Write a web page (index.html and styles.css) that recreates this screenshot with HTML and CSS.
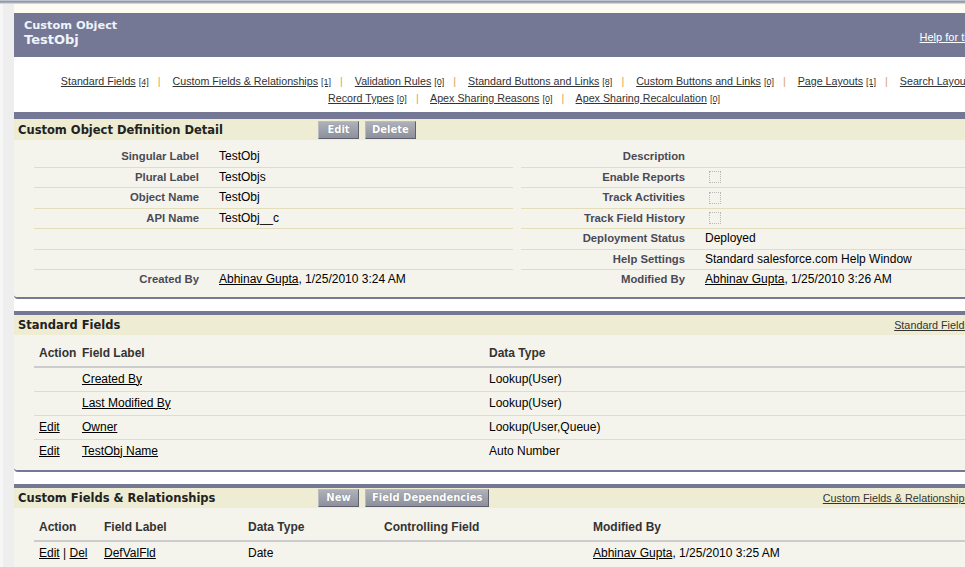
FILE: index.html
```html
<!DOCTYPE html>
<html lang="en">
<head>
    <meta charset="UTF-8">
    <title>Custom Object: TestObj</title>
    <link rel="stylesheet" href="styles.css">
</head>
<body>
    <div class="topline"></div>
    <div class="wrap">
        <div class="gutter"></div>
        <div class="main">
            <div class="page-top">
                <div class="ptitle">
                    <div class="ptitle-text">
                        <div class="ptype">Custom Object</div>
                        <div class="pname">TestObj</div>
                    </div>
                    <a class="ptitle-help" href="#">Help for this Page</a>
                    <span class="help-icon">?</span>
                </div>
            </div>

            <div class="rel-links">
                <div>
                    <a href="#">Standard Fields<span class="count">[4]</span></a><span class="sep">|</span>
                    <a href="#">Custom Fields &amp; Relationships<span class="count">[1]</span></a><span class="sep">|</span>
                    <a href="#">Validation Rules<span class="count">[0]</span></a><span class="sep">|</span>
                    <a href="#">Standard Buttons and Links<span class="count">[8]</span></a><span class="sep">|</span>
                    <a href="#">Custom Buttons and Links<span class="count">[0]</span></a><span class="sep">|</span>
                    <a href="#">Page Layouts<span class="count">[1]</span></a><span class="sep">|</span>
                    <a href="#">Search Layouts<span class="count">[1]</span></a>
                </div>
                <div>
                    <a href="#">Record Types<span class="count">[0]</span></a><span class="sep">|</span>
                    <a href="#">Apex Sharing Reasons<span class="count">[0]</span></a><span class="sep">|</span>
                    <a href="#">Apex Sharing Recalculation<span class="count">[0]</span></a>
                </div>
            </div>

            <!-- detail -->
            <div class="pblock first">
                <div class="pb-head">
                    <h2 class="pb-title">Custom Object Definition Detail</h2>
                    <div class="pb-buttons">
                        <button class="btn">Edit</button>
                        <button class="btn">Delete</button>
                    </div>
                </div>
                <div class="pb-body detail-body">
                    <table class="detail-list">
                        <colgroup>
                            <col style="width:175px"><col style="width:304px"><col style="width:8px"><col style="width:174px"><col style="width:305px">
                        </colgroup>
                        <tr>
                            <td class="lbl">Singular Label</td><td class="val">TestObj</td><td class="sp"></td>
                            <td class="lbl">Description</td><td class="val"></td>
                        </tr>
                        <tr>
                            <td class="lbl">Plural Label</td><td class="val">TestObjs</td><td class="sp"></td>
                            <td class="lbl">Enable Reports</td><td class="val"><span class="chk"></span></td>
                        </tr>
                        <tr>
                            <td class="lbl">Object Name</td><td class="val">TestObj</td><td class="sp"></td>
                            <td class="lbl">Track Activities</td><td class="val"><span class="chk"></span></td>
                        </tr>
                        <tr>
                            <td class="lbl">API Name</td><td class="val">TestObj__c</td><td class="sp"></td>
                            <td class="lbl">Track Field History</td><td class="val"><span class="chk"></span></td>
                        </tr>
                        <tr>
                            <td class="lbl"></td><td class="val"></td><td class="sp"></td>
                            <td class="lbl">Deployment Status</td><td class="val">Deployed</td>
                        </tr>
                        <tr>
                            <td class="lbl"></td><td class="val"></td><td class="sp"></td>
                            <td class="lbl">Help Settings</td><td class="val">Standard salesforce.com Help Window</td>
                        </tr>
                        <tr>
                            <td class="lbl">Created By</td><td class="val"><a href="#">Abhinav Gupta</a>, 1/25/2010 3:24 AM</td><td class="sp"></td>
                            <td class="lbl">Modified By</td><td class="val"><a href="#">Abhinav Gupta</a>, 1/25/2010 3:26 AM</td>
                        </tr>
                    </table>
                </div>
            </div>

            <!-- standard fields -->
            <div class="pblock">
                <div class="pb-head">
                    <h2 class="pb-title">Standard Fields</h2>
                    <a class="pb-help" href="#">Standard Fields Help</a>
                    <span class="help-icon">?</span>
                </div>
                <div class="pb-body std-body">
                    <table class="list">
                        <colgroup>
                            <col style="width:43px"><col style="width:407px"><col>
                        </colgroup>
                        <tr><th>Action</th><th>Field Label</th><th>Data Type</th></tr>
                        <tr><td></td><td><a href="#">Created By</a></td><td>Lookup(User)</td></tr>
                        <tr><td></td><td><a href="#">Last Modified By</a></td><td>Lookup(User)</td></tr>
                        <tr><td><a href="#">Edit</a></td><td><a href="#">Owner</a></td><td>Lookup(User,Queue)</td></tr>
                        <tr><td><a href="#">Edit</a></td><td><a href="#">TestObj Name</a></td><td>Auto Number</td></tr>
                    </table>
                </div>
            </div>

            <!-- custom fields -->
            <div class="pblock">
                <div class="pb-head">
                    <h2 class="pb-title">Custom Fields &amp; Relationships</h2>
                    <div class="pb-buttons">
                        <button class="btn">New</button>
                        <button class="btn">Field Dependencies</button>
                    </div>
                    <a class="pb-help" href="#">Custom Fields &amp; Relationships Help</a>
                    <span class="help-icon">?</span>
                </div>
                <div class="pb-body">
                    <table class="list">
                        <colgroup>
                            <col style="width:65px"><col style="width:144px"><col style="width:136px"><col style="width:209px"><col>
                        </colgroup>
                        <tr><th>Action</th><th>Field Label</th><th>Data Type</th><th>Controlling Field</th><th>Modified By</th></tr>
                        <tr>
                            <td><a href="#">Edit</a> | <a href="#">Del</a></td>
                            <td><a href="#">DefValFld</a></td>
                            <td>Date</td>
                            <td></td>
                            <td><a href="#">Abhinav Gupta</a>, 1/25/2010 3:25 AM</td>
                        </tr>
                    </table>
                </div>
            </div>
        </div>
    </div>
</body>
</html>
```

FILE: styles.css
```css
body {
    margin: 0;
    font-family: 'Liberation Sans', Arial, sans-serif;
    font-size: 12px;
    color: #000;
    background-color: #fff;
    overflow: hidden;
}

a {
    color: #000;
    text-decoration: underline;
}

.topline {
    height: 4px;
    background: linear-gradient(#d4d8e0, #8d96aa 40%, #aab1c0 70%, #eceef2);
}

.wrap {
    display: flex;
    min-height: calc(100vh - 4px);
}

.gutter {
    flex: none;
    width: 11px;
    background-color: #eeeeee;
    border-left: 3px solid #f6f6f6;
}

.main {
    flex: none;
    width: 1020px;
}

/* page title */
.page-top {
    padding-top: 9px;
    background-color: #fcfcf3;
}

.ptitle {
    display: flex;
    align-items: flex-start;
    height: 38px;
    padding: 6px 9px 0 10px;
    background-color: #747894;
    color: #f0f3fa;
}

.ptitle-text {
    flex: 1;
    font-family: 'DejaVu Sans', Verdana, sans-serif;
    font-weight: bold;
}

.ptype {
    font-size: 11.3px;
    line-height: 13px;
}

.pname {
    font-size: 13px;
    line-height: 16px;
}

.ptitle-help {
    color: #fff;
    font-size: 11px;
    line-height: 14px;
    margin-top: 11px;
}

.ptitle .help-icon {
    margin-top: 11px;
}

.help-icon {
    display: inline-block;
    width: 14px;
    height: 14px;
    margin-left: 4px;
    border-radius: 50%;
    background-color: #e8a33a;
    color: #fff;
    font-size: 10px;
    font-weight: bold;
    line-height: 14px;
    text-align: center;
}

/* related list links */
.rel-links {
    padding: 16px 0 5px;
    text-align: center;
    font-size: 10.7px;
    line-height: 17px;
    color: #333;
}

.rel-links div {
    height: 17px;
}

.rel-links a {
    color: #333;
}

.count {
    font-size: 9px;
    line-height: 0;
    margin-left: 3px;
}

.sep {
    padding: 0 9px;
    color: #d8a457;
}

/* page blocks */
.pblock {
    margin-bottom: 12px;
    background-color: #f5f4ec;
    border-top: 4px solid #747894;
    border-bottom: 2px solid #747894;
    border-radius: 0 0 4px 4px;
}

.pblock.first {
    border-top-width: 7px;
}

.pb-head {
    display: flex;
    align-items: center;
    height: 20px;
    padding-right: 21px;
    background-color: #eeecd3;
}

.pblock.first .pb-head {
    height: 21px;
}

.pb-title {
    width: 300px;
    margin: 0;
    padding-left: 4px;
    flex: none;
    font-family: 'DejaVu Sans', Verdana, sans-serif;
    font-size: 11.5px;
    font-weight: bold;
    color: #222;
}

.pb-buttons {
    display: flex;
    gap: 6px;
}

.btn {
    min-width: 41px;
    height: 18px;
    padding: 0 6px;
    font-family: 'DejaVu Sans', Verdana, sans-serif;
    font-size: 10px;
    font-weight: bold;
    color: #fff;
    background: linear-gradient(#aeb0ba, #8e909c);
    border: 1px solid;
    border-color: #b9bbc3 #5d5f6c #5d5f6c #b9bbc3;
    text-shadow: 0 0 1px #6b6d78;
    cursor: pointer;
}

.pb-help {
    margin-left: auto;
    font-size: 10.8px;
    color: #333;
}

.pb-body {
    padding: 7px 20px 7px;
}

.std-body {
    padding-top: 6px;
}

/* detail list */
.detail-list {
    width: 966px;
    border-collapse: collapse;
    table-layout: fixed;
}

.detail-list td {
    height: 13.5px;
    padding: 3px 10px;
    line-height: 13.5px;
    border-bottom: 1px solid #e4ddbb;
    vertical-align: middle;
}

.detail-list tr:last-child td {
    border-bottom: none;
}

.detail-list td.sp {
    padding: 0;
    border-bottom: none;
}

.detail-list .lbl {
    text-align: right;
    font-size: 11.3px;
    font-weight: bold;
    color: #4a4a56;
}

.chk {
    display: inline-block;
    width: 10px;
    height: 10px;
    margin-left: 4px;
    border: 1px dotted #b8b8b8;
    vertical-align: middle;
}

/* related lists */
.list {
    width: 980px;
    border-collapse: collapse;
    table-layout: fixed;
}

.list th {
    height: 17px;
    padding: 4px 5px;
    text-align: left;
    font-size: 12px;
    font-weight: bold;
    color: #333;
    border-bottom: 2px solid #cccccc;
}

.list td {
    height: 15px;
    padding: 4px 5px;
    line-height: 15px;
    border-bottom: 1px solid #e4ddbb;
}

.list tr:last-child td {
    border-bottom: none;
}
```
